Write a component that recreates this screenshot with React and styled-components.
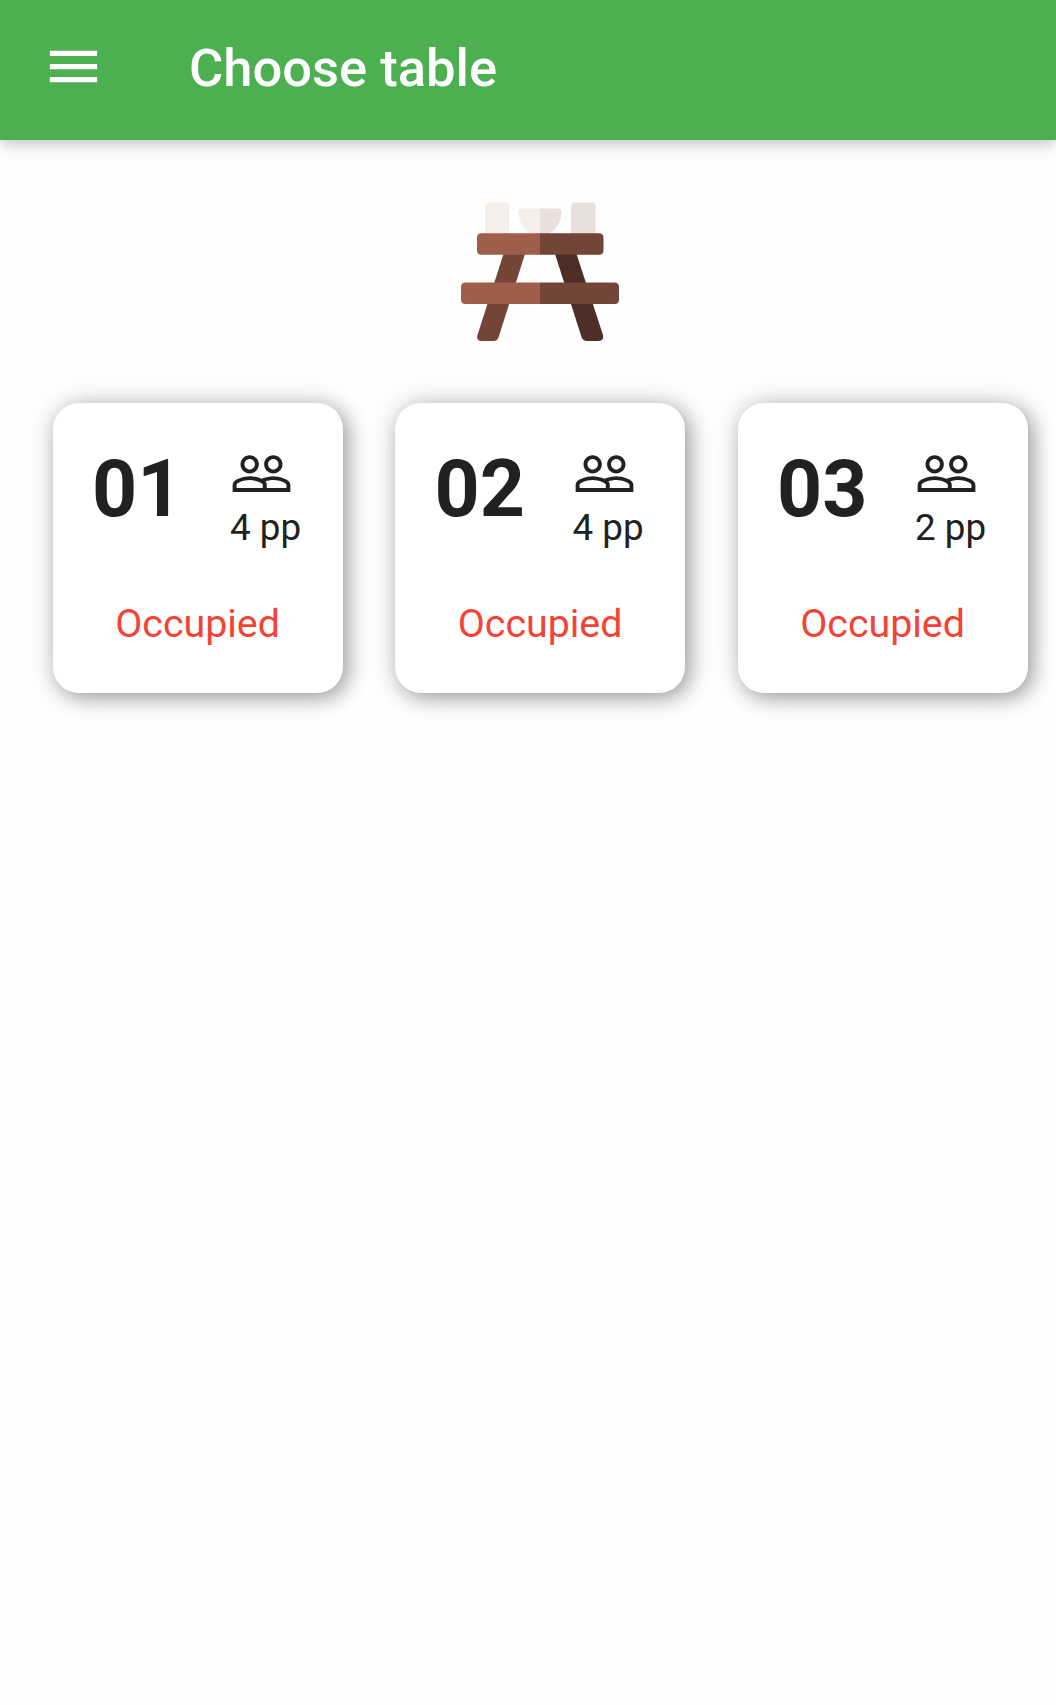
import React from "react";
import styled, { createGlobalStyle } from "styled-components";
import { MdMenu, MdPeopleOutline } from "react-icons/md";

const GlobalStyle = createGlobalStyle`
  * { box-sizing: border-box; }
  body {
    margin: 0;
    background: #fefefe;
    color: #212121;
    font-family: Roboto, "Liberation Sans", sans-serif;
  }
`;

const Screen = styled.div`
  display: flex;
  flex-direction: column;
  width: 1056px;
  height: 1705px;
  overflow: hidden;
  background: #fefefe;
`;

const AppBar = styled.header`
  display: flex;
  flex: none;
  align-items: center;
  height: 140px;
  padding: 0 42px 7px;
  background: #4caf50;
  color: #fff;
  box-shadow: 0 5px 10px -2px rgba(0, 0, 0, 0.12), 0 8px 14px rgba(0, 0, 0, 0.07),
    0 3px 24px rgba(0, 0, 0, 0.05);
`;

const MenuButton = styled.button`
  display: flex;
  padding: 0;
  border: 0;
  background: none;
  color: inherit;
  font-size: 63px;
`;

const Title = styled.h1`
  margin: 3px 0 0 84px;
  font-size: 52.5px;
  line-height: 62px;
  font-weight: 500;
`;

const Content = styled.main`
  display: flex;
  flex: 1;
  flex-direction: column;
  padding: 53px 0 0 52.6px;
`;

const PicnicTable = styled.svg`
  flex: none;
  width: 158px;
  height: 158px;
  margin: 0 0 52px 408.4px;
`;

const TableRow = styled.section`
  display: flex;
  gap: 52.5px;
`;

const Card = styled.article`
  display: flex;
  flex: none;
  flex-direction: column;
  width: 290px;
  height: 290px;
  padding: 39px 39px 39px 39.5px;
  border-radius: 26px;
  background: #fff;
  box-shadow: 5px 5px 20px rgba(0, 0, 0, 0.32), 0 0 30px rgba(0, 0, 0, 0.13);
`;

const CardTop = styled.div`
  display: flex;
  align-items: flex-start;
  justify-content: space-between;
  height: 159px;
`;

const TableNumber = styled.strong`
  margin-top: 1px;
  font-size: 78.75px;
  line-height: 92px;
  font-weight: 700;
`;

const Seats = styled.div`
  display: flex;
  flex-direction: column;
  width: 73.5px;
  font-size: 36.75px;
  line-height: 45px;
  white-space: nowrap;
`;

const SeatsIcon = styled(MdPeopleOutline)`
  width: 63px;
  height: 63px;
`;

const Status = styled.span`
  align-self: center;
  margin-right: 0.5px;
  color: #f44336;
  font-size: 39.375px;
  line-height: 46px;
`;

const tables = [
  { number: "01", seats: 4, status: "Occupied" },
  { number: "02", seats: 4, status: "Occupied" },
  { number: "03", seats: 2, status: "Occupied" },
];

export default function App() {
  return (
    <Screen>
      <GlobalStyle />
      <AppBar>
        <MenuButton aria-label="Menu">
          <MdMenu />
        </MenuButton>
        <Title>Choose table</Title>
      </AppBar>
      <Content>
        <PicnicTable viewBox="0 0 158 158" aria-hidden="true">
          <path fill="#734536" d="M42.500 61 L64 61 L37.5 144.500 Q36 148 32.500 148 H20.500 Q15 147.500 16.500 142 Z" />
          <path fill="#4e2d26" d="M94 61 H115.500 L142 142 Q143.500 147.500 137.500 148 H126 Q122 148 120.500 144 Z" />
          <path fill="#f4efeb" d="M24 41 V13.500 Q24 9.500 28 9.500 H44 Q48 9.500 48 13.500 V41 Z M79 15.500 H61 Q57.300 15.500 57.500 20 Q58.500 34 70 41 H79 Z" />
          <path fill="#e9e0dc" d="M110 41 V13.500 Q110 9.500 114 9.500 H130.500 Q134.500 9.500 134.500 13.500 V41 Z M79 15.500 H97 Q100.700 15.500 100.500 20 Q99.500 34 88 41 H79 Z" />
          <path fill="#9e5e49" d="M79 40.200 H20.500 Q16 40.200 16 44.700 V57.300 Q16 61.800 20.500 61.800 H79 Z M79 89.500 H4.500 Q0 89.500 0 94 V106.500 Q0 111 4.500 111 H79 Z" />
          <path fill="#734536" d="M79 40.200 H138 Q142.500 40.200 142.500 44.700 V57.300 Q142.500 61.800 138 61.800 H79 Z M79 89.500 H153.500 Q158 89.500 158 94 V106.500 Q158 111 153.500 111 H79 Z" />
        </PicnicTable>
        <TableRow>
          {tables.map((table) => (
            <Card key={table.number}>
              <CardTop>
                <TableNumber>{table.number}</TableNumber>
                <Seats>
                  <SeatsIcon />
                  <span>{table.seats} pp</span>
                </Seats>
              </CardTop>
              <Status>{table.status}</Status>
            </Card>
          ))}
        </TableRow>
      </Content>
    </Screen>
  );
}
